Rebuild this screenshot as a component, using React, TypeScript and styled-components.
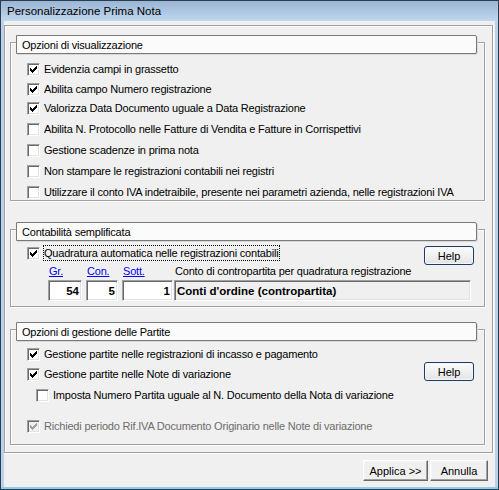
import styled, { createGlobalStyle } from "styled-components";

const GlobalStyle = createGlobalStyle`
  html, body {
    margin: 0;
    padding: 0;
    background: #f0f0f0;
  }
  body {
    font-family: "Liberation Sans", Arial, sans-serif;
    font-size: 11px;
    color: #000;
  }
`;

const Window = styled.div`
  width: 499px;
  height: 490px;
  box-sizing: border-box;
  border: 1px solid #2c3d52;
  display: flex;
  flex-direction: column;
  overflow: hidden;
`;

const TitleBar = styled.div`
  height: 20px;
  flex: none;
  display: flex;
  align-items: center;
  padding-left: 6px;
  background: linear-gradient(#9bb6d4, #c0d7ee);
  font-size: 11.5px;
`;

const Frame = styled.div`
  flex: 1;
  display: flex;
  padding: 0 3px 2px 3px;
  background: linear-gradient(90deg, #bad2ea, #b7d3ec);
  border-bottom: 0;
  box-shadow: inset 0 -2px 0 #8fcdec;
`;

const Client = styled.div`
  flex: 1;
  display: flex;
  flex-direction: column;
  background: #f0f0f0;
`;

const Panel = styled.div`
  margin: 4px 2px 0 0;
  border: 1px solid #a0a0a0;
  box-shadow: 1px 1px 0 #fff, inset 1px 1px 0 #fff;
  padding: 0 7px 7px 5px;
  display: flex;
  flex-direction: column;
`;

const Group = styled.div<{ $mt: number; $pb: number }>`
  margin-top: ${(p) => p.$mt}px;
  padding-bottom: ${(p) => p.$pb}px;
  border: 1px solid #a0a0a0;
  box-shadow: 1px 1px 0 #fff, inset 1px 1px 0 #fff;
`;

const GroupHeader = styled.div`
  margin: -8px 7px 0 5px;
  height: 19px;
  box-sizing: border-box;
  border: 1px solid #7a7a7a;
  border-radius: 0 2px 2px 0;
  box-shadow: 1px 1px 0 #d8d8d8;
  background: #fbfbfb;
  padding-left: 5px;
  display: flex;
  align-items: center;
  letter-spacing: -0.2px;
`;

const CheckRow = styled.div<{ $mt: number; $indent?: number }>`
  display: flex;
  align-items: center;
  height: 14px;
  margin-top: ${(p) => p.$mt}px;
  padding-left: ${(p) => p.$indent ?? 16}px;
`;

const Box = styled.span<{ $disabled?: boolean }>`
  width: 13px;
  height: 13px;
  box-sizing: border-box;
  flex: none;
  display: flex;
  border: 1px solid;
  border-color: #a0a0a0 #fff #fff #a0a0a0;
  box-shadow: inset 1px 1px 0 #696969, inset -1px -1px 0 #e3e3e3;
  background: ${(p) => (p.$disabled ? "#f0f0f0" : "#fff")};
`;

const Label = styled.span<{ $disabled?: boolean; $focused?: boolean }>`
  white-space: nowrap;
  letter-spacing: -0.2px;
  line-height: 14px;
  color: ${(p) => (p.$disabled ? "#6d6d6d" : "#000")};
  margin-left: ${(p) => (p.$focused ? 3 : 4)}px;
  border: ${(p) => (p.$focused ? "1px dotted #000" : "0")};
  padding-right: ${(p) => (p.$focused ? 1 : 0)}px;
`;

const TopLine = styled.div`
  display: flex;
  justify-content: space-between;
  align-items: flex-start;
  margin-top: 4px;
  padding-left: 16px;
`;

const FocusRow = styled.div`
  display: flex;
  align-items: center;
  height: 16px;
`;

const HelpButton = styled.button<{ $mt: number }>`
  width: 50px;
  height: 19px;
  margin: ${(p) => p.$mt}px 10px 0 0;
  padding: 0;
  box-sizing: border-box;
  border: 1px solid #1d3c66;
  border-radius: 3px;
  background: linear-gradient(#fcfcfc, #e4e4e4);
  box-shadow: inset 0 0 0 1px #f6f6f6;
  font-family: "Liberation Sans", Arial, sans-serif;
  font-size: 11px;
  color: #000;
  flex: none;
`;

const AccountGrid = styled.div`
  display: grid;
  grid-template-columns: 38px 36px 52px 297px;
  grid-template-rows: 13px 21px;
  row-gap: 2px;
  margin-left: 37px;
`;

const FieldLabel = styled.span<{ $link?: boolean }>`
  padding-left: 1px;
  line-height: 13px;
  white-space: nowrap;
  letter-spacing: -0.2px;
  color: ${(p) => (p.$link ? "#0000ff" : "#000")};
  text-decoration: ${(p) => (p.$link ? "underline" : "none")};
`;

const Field = styled.div<{ $w: number; $right?: boolean; $readOnly?: boolean }>`
  width: ${(p) => p.$w}px;
  height: 21px;
  box-sizing: border-box;
  border: 1px solid;
  border-color: #a0a0a0 #fff #fff #a0a0a0;
  box-shadow: inset 1px 1px 0 #696969, inset -1px -1px 0 #e3e3e3;
  background: ${(p) => (p.$readOnly ? "#f0f0f0" : "#fff")};
  display: flex;
  align-items: center;
  justify-content: ${(p) => (p.$right ? "flex-end" : "flex-start")};
  padding: 0 2px 0 2px;
  font-weight: bold;
  font-size: 11.5px;
  white-space: nowrap;
  overflow: hidden;
`;

const PartiteBody = styled.div`
  display: flex;
  align-items: flex-start;
`;

const Column = styled.div`
  flex: 1;
  display: flex;
  flex-direction: column;
`;

const ButtonRow = styled.div`
  display: flex;
  justify-content: flex-end;
  gap: 2px;
  margin: 7px 7px 0 0;
`;

const DialogButton = styled.button<{ $w: number }>`
  width: ${(p) => p.$w}px;
  height: 21px;
  padding: 0;
  box-sizing: border-box;
  border: 1px solid;
  border-color: #fff #696969 #696969 #fff;
  box-shadow: inset -1px -1px 0 #a0a0a0, inset 1px 1px 0 #f4f4f4;
  background: #f0f0f0;
  font-family: "Liberation Sans", Arial, sans-serif;
  font-size: 11px;
  color: #000;
`;

const CHECK = [
  [2, 4],
  [3, 5],
  [4, 6],
  [5, 5],
  [6, 4],
  [7, 3],
  [8, 2],
];

const CheckBox = ({ checked, disabled }: { checked?: boolean; disabled?: boolean }) => (
  <Box $disabled={disabled}>
    {checked && (
      <svg width="11" height="11" viewBox="0 0 11 11" shapeRendering="crispEdges">
        {CHECK.map(([x, y]) => (
          <rect key={x} x={x} y={y} width="1" height="3" fill={disabled ? "#a0a0a0" : "#000"} />
        ))}
      </svg>
    )}
  </Box>
);

const visualizzazione = [
  { text: "Evidenzia campi in grassetto", checked: true, mt: 8 },
  { text: "Abilita campo Numero registrazione", checked: true, mt: 6 },
  { text: "Valorizza Data Documento uguale a Data Registrazione", checked: true, mt: 5 },
  { text: "Abilita N. Protocollo nelle Fatture di Vendita e Fatture in Corrispettivi", checked: false, mt: 7 },
  { text: "Gestione scadenze in prima nota", checked: false, mt: 7 },
  { text: "Non stampare le registrazioni contabili nei registri", checked: false, mt: 7 },
  {
    text: "Utilizzare il conto IVA indetraibile, presente nei parametri azienda, nelle registrazioni IVA",
    checked: false,
    mt: 7,
  },
];

export default function App() {
  return (
    <>
      <GlobalStyle />
      <Window>
        <TitleBar>Personalizzazione Prima Nota</TitleBar>
        <Frame>
          <Client>
            <Panel>
              <Group $mt={16} $pb={1}>
                <GroupHeader>Opzioni di visualizzazione</GroupHeader>
                {visualizzazione.map((r) => (
                  <CheckRow key={r.text} $mt={r.mt}>
                    <CheckBox checked={r.checked} />
                    <Label>{r.text}</Label>
                  </CheckRow>
                ))}
              </Group>

              <Group $mt={28} $pb={5}>
                <GroupHeader>Contabilità semplificata</GroupHeader>
                <TopLine>
                  <FocusRow>
                    <CheckBox checked />
                    <Label $focused>Quadratura automatica nelle registrazioni contabili</Label>
                  </FocusRow>
                  <HelpButton $mt={1}>Help</HelpButton>
                </TopLine>
                <AccountGrid>
                  <FieldLabel $link>Gr.</FieldLabel>
                  <FieldLabel $link>Con.</FieldLabel>
                  <FieldLabel $link>Sott.</FieldLabel>
                  <FieldLabel>Conto di contropartita per quadratura registrazione</FieldLabel>
                  <Field $w={34} $right>54</Field>
                  <Field $w={32} $right>5</Field>
                  <Field $w={51} $right>1</Field>
                  <Field $w={297} $readOnly>Conti d'ordine (contropartita)</Field>
                </AccountGrid>
              </Group>

              <Group $mt={22} $pb={11}>
                <GroupHeader>Opzioni di gestione delle Partite</GroupHeader>
                <PartiteBody>
                  <Column>
                    <CheckRow $mt={6}>
                      <CheckBox checked />
                      <Label>Gestione partite nelle registrazioni di incasso e pagamento</Label>
                    </CheckRow>
                    <CheckRow $mt={6}>
                      <CheckBox checked />
                      <Label>Gestione partite nelle Note di variazione</Label>
                    </CheckRow>
                    <CheckRow $mt={7} $indent={25}>
                      <CheckBox />
                      <Label>Imposta Numero Partita uguale al N. Documento della Nota di variazione</Label>
                    </CheckRow>
                    <CheckRow $mt={17}>
                      <CheckBox checked disabled />
                      <Label $disabled>Richiedi periodo Rif.IVA Documento Originario nelle Note di variazione</Label>
                    </CheckRow>
                  </Column>
                  <HelpButton $mt={21}>Help</HelpButton>
                </PartiteBody>
              </Group>
            </Panel>
            <ButtonRow>
              <DialogButton $w={65}>Applica &gt;&gt;</DialogButton>
              <DialogButton $w={58}>Annulla</DialogButton>
            </ButtonRow>
          </Client>
        </Frame>
      </Window>
    </>
  );
}
